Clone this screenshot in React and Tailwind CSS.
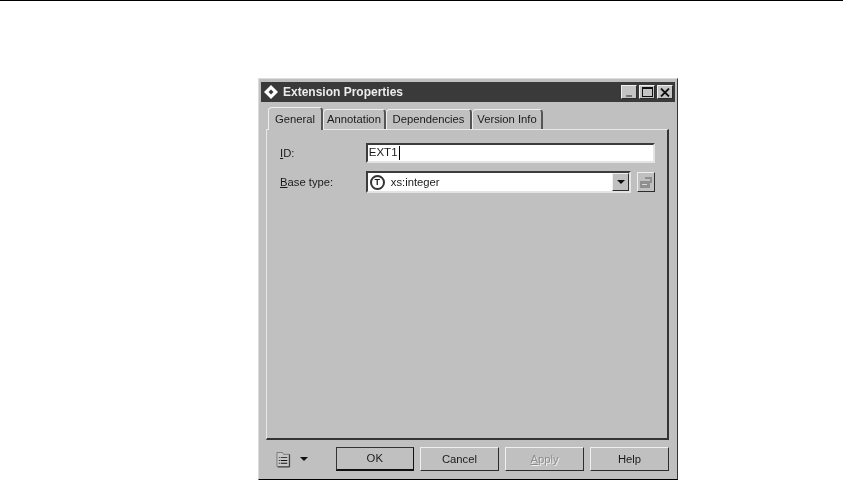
const raised = "border border-t-[#efefef] border-l-[#efefef] border-r-[#2c2c2c] border-b-[#2c2c2c]";
const sunken = "border-2 border-t-[#3c3c3c] border-l-[#3c3c3c] border-r-[#e4e4e4] border-b-[#e4e4e4]";

const Caret = () => (
  <svg width="8" height="4" viewBox="0 0 8 4" className="block">
    <path d="M0 0h8L4 4z" fill="#111111" />
  </svg>
);

const WinButton = ({ children, className = "" }) => (
  <div className={`flex h-[14px] w-4 items-center justify-center bg-[#c4c4c4] ${raised} ${className}`}>
    {children}
  </div>
);

const Tab = ({ label, active, width }) => (
  <div
    className={`flex items-center justify-center rounded-t-sm border-t border-l border-t-[#eeeeee] border-l-[#eeeeee] border-r-2 border-r-[#555555] ${width} ${
      active ? "relative z-10 -mb-px h-[23px] bg-[#c0c0c0]" : "h-[20px]"
    }`}
  >
    {label}
  </div>
);

const DialogButton = ({ children, width, disabled, strong }) => (
  <button
    type="button"
    className={`flex h-6 items-center justify-center bg-[#c0c0c0] ${width} ${
      strong
        ? "border border-t-[#333333] border-l-[#333333] border-r-[#111111] border-b-2 border-b-[#111111]"
        : raised
    } ${disabled ? "text-[#8c8c8c] [text-shadow:1px_1px_0_#eeeeee]" : "text-[#1a1a1a]"}`}
  >
    {children}
  </button>
);

export default function App() {
  return (
    <div className="h-[481px] overflow-hidden border-t border-black bg-white font-['Liberation_Sans',sans-serif] text-[11.25px] text-[#1a1a1a]">
      <div className="ml-[258px] mt-[77px] flex h-[402px] w-[420px] flex-col border border-t-[#dcdcdc] border-l-[#dcdcdc] border-r-[#333333] border-b-black bg-[#c0c0c0] px-[2px] pt-[3px] blur-[0.3px]">
        {/* TITLE BAR */}
        <div className="flex h-5 shrink-0 items-center justify-between bg-[#3a3a3a] pl-[3px] pr-[2px]">
          <div className="flex items-center gap-[5px] text-[12px] font-bold text-[#ececec]">
            <svg width="14" height="14" viewBox="0 0 14 14">
              <path d="M7 0l7 7-7 7-7-7z" fill="#ffffff" />
              <path d="M7 4.5L9.5 7 7 9.5 4.5 7z" fill="#3a3a3a" />
            </svg>
            <span>Extension Properties</span>
          </div>
          <div className="flex items-center">
            <WinButton>
              <div className="mt-[7px] h-[2px] w-[6px] bg-[#777777]" />
            </WinButton>
            <WinButton className="ml-[2px]">
              <div className="h-[10px] w-[11px] border border-t-2 border-[#111111]" />
            </WinButton>
            <WinButton className="ml-[2px]">
              <svg width="10" height="9" viewBox="0 0 10 9">
                <path d="M1 0.5l8 8M9 0.5l-8 8" stroke="#111111" strokeWidth="1.8" />
              </svg>
            </WinButton>
          </div>
        </div>

        {/* TABS */}
        <div className="ml-[7px] mt-[6px] flex h-[21px] shrink-0 items-end">
          <Tab label="General" active width="w-[55px]" />
          <Tab label="Annotation" width="w-[63px]" />
          <Tab label="Dependencies" width="w-[86px]" />
          <Tab label="Version Info" width="w-[71px]" />
        </div>

        {/* PANEL */}
        <div className="ml-[5px] mr-[6px] flex h-[311px] shrink-0 flex-col border-t border-l border-t-[#e8e8e8] border-l-[#e8e8e8] border-r-2 border-b-2 border-r-[#333333] border-b-[#333333] pl-[13px] pr-[12px] pt-[13px]">
          <div className="flex h-5 items-center">
            <span className="w-[86px]">
              <span className="underline">I</span>D:
            </span>
            <div className={`flex h-5 w-[290px] items-center bg-white pl-[1px] ${sunken}`}>
              <span className="text-[11.5px]">EXT1</span>
              <div className="ml-[1px] h-[14px] w-px bg-black" />
            </div>
          </div>
          <div className="mt-[8px] flex h-[22px] items-center">
            <span className="w-[86px]">
              <span className="underline">B</span>ase type:
            </span>
            <div className={`flex h-[22px] w-[266px] items-center justify-between bg-white ${sunken}`}>
              <div className="flex items-center gap-[6px] pl-[2px]">
                <div className="flex h-[15px] w-[15px] items-center justify-center rounded-full border-2 border-[#333333] text-[9px] font-bold leading-none">
                  T
                </div>
                <span>xs:integer</span>
              </div>
              <div className={`flex h-[18px] w-[17px] items-center justify-center bg-[#c0c0c0] ${raised}`}>
                <Caret />
              </div>
            </div>
            <div className={`ml-[6px] flex h-5 w-[18px] items-center justify-center bg-[#c0c0c0] ${raised}`}>
              <svg width="12" height="11" viewBox="0 0 12 11">
                <path d="M5 0h7v6h-2V2H5z" fill="#8f8f8f" />
                <path d="M0 4h10v7H0z" fill="#8f8f8f" />
                <path d="M2 7h5v1H2z" fill="#d8d8d8" />
              </svg>
            </div>
          </div>
        </div>

        {/* FOOTER */}
        <div className="ml-[15px] mr-[6px] mt-[7px] flex items-center">
          <svg width="16" height="17" viewBox="0 0 16 17">
            <path d="M1 1h6l1 2h6v13H1z" fill="#c8c8c8" stroke="#777777" />
            <path d="M14.5 3v13.5H2" fill="none" stroke="#333333" />
            <path d="M3 6h1v1H3zM5 6h7v1H5zM3 9h1v1H3zM5 9h7v1H5zM3 12h1v1H3zM5 12h7v1H5z" fill="#111111" />
          </svg>
          <div className="ml-[9px]">
            <Caret />
          </div>
          <div className="ml-[28px] flex gap-[6px]">
            <DialogButton strong width="w-[78px]">
              <span className="tracking-wide">OK</span>
            </DialogButton>
            <DialogButton width="w-[79px]">Cancel</DialogButton>
            <DialogButton disabled width="w-[79px]">
              <span>
                <span className="underline">A</span>pply
              </span>
            </DialogButton>
            <DialogButton width="w-[79px]">Help</DialogButton>
          </div>
        </div>
      </div>
    </div>
  );
}
